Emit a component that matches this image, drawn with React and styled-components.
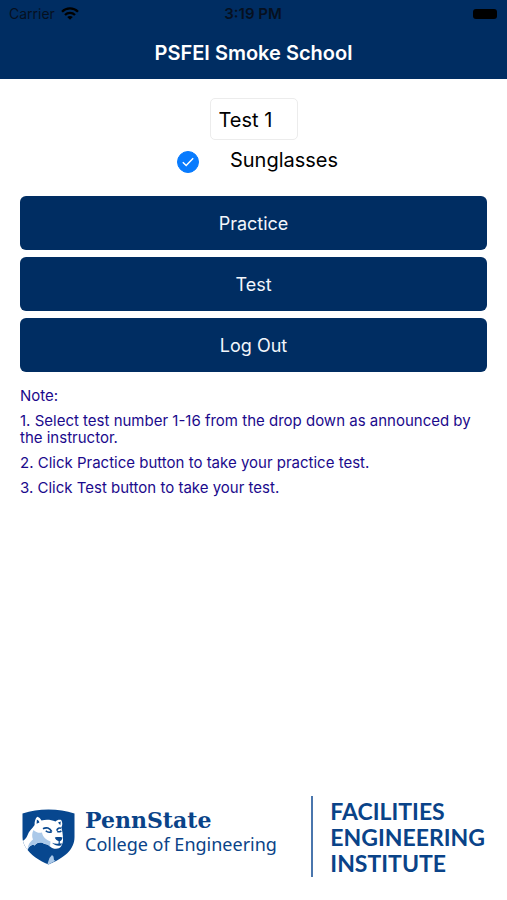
import React, { useState } from "react";
import styled, { createGlobalStyle } from "styled-components";

const NAVY = "#002d62";
const LOGO_BLUE = "#0a4388";

const GlobalStyle = createGlobalStyle`
  *, *::before, *::after { box-sizing: border-box; }
  body {
    margin: 0;
    background: #fff;
    color: #000;
    font-family: Inter, "Liberation Sans", sans-serif;
  }
`;

const Screen = styled.div`
  min-height: 100vh;
  display: flex;
  flex-direction: column;
`;

const Header = styled.header`
  background: ${NAVY};
  height: 79px;
`;

const StatusBar = styled.div`
  display: grid;
  grid-template-columns: 1fr auto 1fr;
  align-items: center;
  height: 27px;
  padding: 0 10px 0 9px;
  font-size: 14px;
  color: #06101f;
`;

const Carrier = styled.span`
  display: flex;
  align-items: center;
  gap: 6px;
`;

const Clock = styled.span`
  font-size: 15px;
  font-weight: 600;
`;

const Battery = styled.span`
  justify-self: end;
  width: 24px;
  height: 10px;
  border-radius: 3px;
  background: #000;
`;

const Title = styled.h1`
  margin: 0;
  font-size: 20px;
  line-height: 52px;
  font-weight: 600;
  color: #fff;
  text-align: center;
`;

const Form = styled.form`
  display: flex;
  flex-direction: column;
  align-items: center;
  padding: 19px 20px 0;
`;

const TestSelect = styled.select`
  appearance: none;
  width: 88px;
  height: 42px;
  padding: 2px 8px 0;
  border: 1px solid #ececec;
  border-radius: 5px;
  background: #fff;
  color: #000;
  font-family: inherit;
  font-size: 20px;
`;

const Option = styled.label`
  display: flex;
  align-items: center;
  gap: 31px;
  height: 40px;
  padding-left: 8px;
  font-size: 20px;
`;

const Tick = styled.span`
  display: grid;
  place-items: center;
  padding-top: 4px;

  > * { grid-area: 1 / 1; }
  > svg { pointer-events: none; }
`;

const TickInput = styled.input`
  appearance: none;
  width: 22px;
  height: 22px;
  margin: 0;
  border: 1px solid #c7c7cc;
  border-radius: 50%;

  &:checked {
    border-color: #087bfe;
    background: #087bfe;
  }
`;

const Actions = styled.div`
  align-self: stretch;
  display: flex;
  flex-direction: column;
  gap: 7px;
  padding-top: 16px;
`;

const ActionButton = styled.button`
  height: 54px;
  border: 0;
  border-radius: 6px;
  background: ${NAVY};
  color: #f2f6fb;
  font-family: inherit;
  font-size: 18px;
`;

const Notes = styled.section`
  display: flex;
  flex-direction: column;
  gap: 8px;
  padding: 15px 20px;
  font-size: 15px;
  line-height: 17px;
  color: #1b0a8c;
`;

const Note = styled.p`
  margin: 0;
`;

const Footer = styled.footer`
  display: flex;
  align-items: center;
  justify-content: space-between;
  margin-top: auto;
  padding: 0 22px 23px;
  color: ${LOGO_BLUE};
`;

const College = styled.div`
  display: flex;
  align-items: center;
  gap: 10px;
`;

const CollegeText = styled.div`
  display: flex;
  flex-direction: column;
  padding-bottom: 9px;
  white-space: nowrap;
`;

const University = styled.span`
  font-family: "DejaVu Serif", serif;
  font-weight: 700;
  font-size: 22px;
  line-height: 24px;
`;

const Department = styled.span`
  font-family: "Noto Sans", sans-serif;
  font-size: 18px;
  line-height: 24px;
`;

const Institute = styled.div`
  border-left: 2px solid #4a76ad;
  padding: 2px 0 1px 17px;
  font-family: Lato, sans-serif;
  font-weight: 700;
  font-size: 23px;
  line-height: 26px;
`;

const Line = styled.span`
  display: block;
`;

function WifiIcon() {
  return (
    <svg width="18" height="13" viewBox="0 0 18 13" aria-hidden="true" fill="none" stroke="#000" strokeWidth="2.3">
      <path d="M1 4.7C5.4.3 12.6.3 17 4.7" />
      <path d="M4 8C6.8 5.2 11.2 5.2 14 8" />
      <path d="M9 12.8 6.2 10C7.8 8.5 10.2 8.5 11.8 10Z" fill="#000" stroke="none" />
    </svg>
  );
}

function CheckIcon() {
  return (
    <svg width="12" height="10" viewBox="0 0 12 10" aria-hidden="true" fill="none" stroke="#fff" strokeWidth="1.5">
      <path d="M.8 5.2 4.2 8.5 11.2 1.2" />
    </svg>
  );
}

function LionShield() {
  return (
    <svg width="53" height="56" viewBox="0 0 53 56" role="img" aria-label="PennState shield">
      <path
        fill="#07478f"
        d="M.5 4.5C9 1.6 17 .5 26.5.5S44 1.6 52.5 4.5V28C52.5 41 42 49 26.5 55.5 17 51.5 8 45.5 3.8 38.5 1.5 35 .5 31.5.5 28Z"
      />
      <path
        fill="#fff"
        d="M12.6 16C12.4 12.5 13.4 9.5 15.2 7.8 17 8.2 18.5 9.7 19.5 11.5 24 10.4 29 10.6 33.5 12.6 35 11 37 10.4 39.2 11 40.7 13.5 40.6 16.5 39.3 18.5 40.5 22 40.8 25.5 41 29 41.3 32 40.6 35 39 37.6 37 40.6 31 40.5 28 37.5 26 35 22.5 35.3 19.5 33.5 16.5 33 14.5 34 12.5 36.5 9.5 35 6.5 38 5.5 41.5L3.8 38.5C1.8 35.5 1 32.5 1 31.8 3.2 30.5 4.3 28.8 5.4 26.4 6.8 22.4 10 19.8 12.6 16Z"
      />
      <path
        fill="#abc9e9"
        d="M11.5 21C14 23.5 17 24.4 20 23.5 20.6 27.5 24 31 28.5 32.5L28 37.5C26 35 22.5 35.3 19.5 33.5 16.5 33 14.5 34 12.5 36.5 9.5 35 6.5 38 5.5 41.5 6 35 8.4 32.5 11 30.5 9.7 27.5 10 24 11.5 21Z"
      />
      <path fill="#07478f" d="M14.9 10.4C16.5 11.2 17.2 12.2 17.4 13.5L14.6 14.8ZM36 13.6 38.8 12.6 38.3 16.2Z" />
      <path fill="#abc9e9" d="M25.5 54.8 27.5 49 30 46 31.5 47.5 32 51 33.5 51.8 26.5 55.5Z" />
      <path
        fill="none"
        stroke="#07478f"
        strokeWidth="1.6"
        d="M21 19.8C24.5 17.8 27.8 19 29.8 22.7M23.8 21.8C25.3 23.3 27.3 23.6 29.8 22.7M34.7 21.6C35.6 19.2 37.2 18.4 39 19.3M35.2 22.3C36.5 23.2 38 22.8 39.4 21.8"
      />
      <path fill="#07478f" d="M32.8 28.4C35.5 27.8 38 27.8 40.5 28.4 40.2 30.4 39.2 31.6 37.8 32.2V34.6L40.2 34.4 38.8 36.4C36 37 32.5 36.5 30 33.8 32.5 34.8 34.6 35 36.6 34.6V32C34.6 31.4 33.4 30.2 32.8 28.4Z" />
    </svg>
  );
}

export default function App() {
  const [sunglasses, setSunglasses] = useState(true);
  const [test, setTest] = useState("1");

  return (
    <>
      <GlobalStyle />
      <Screen>
        <Header>
          <StatusBar>
            <Carrier>
              Carrier
              <WifiIcon />
            </Carrier>
            <Clock>3:19 PM</Clock>
            <Battery />
          </StatusBar>
          <Title>PSFEI Smoke School</Title>
        </Header>

        <Form onSubmit={(e) => e.preventDefault()}>
          <TestSelect aria-label="Test number" value={test} onChange={(e) => setTest(e.target.value)}>
            {Array.from({ length: 16 }, (_, i) => (
              <option key={i} value={String(i + 1)}>{`Test ${i + 1}`}</option>
            ))}
          </TestSelect>
          <Option>
            <Tick>
              <TickInput
                type="checkbox"
                checked={sunglasses}
                onChange={(e) => setSunglasses(e.target.checked)}
              />
              {sunglasses && <CheckIcon />}
            </Tick>
            Sunglasses
          </Option>
          <Actions>
            <ActionButton type="button">Practice</ActionButton>
            <ActionButton type="button">Test</ActionButton>
            <ActionButton type="button">Log Out</ActionButton>
          </Actions>
        </Form>

        <Notes>
          <Note>Note:</Note>
          <Note>1. Select test number 1-16 from the drop down as announced by the instructor.</Note>
          <Note>2. Click Practice button to take your practice test.</Note>
          <Note>3. Click Test button to take your test.</Note>
        </Notes>

        <Footer>
          <College>
            <LionShield />
            <CollegeText>
              <University>PennState</University>
              <Department>College of Engineering</Department>
            </CollegeText>
          </College>
          <Institute>
            <Line>FACILITIES</Line>
            <Line>ENGINEERING</Line>
            <Line>INSTITUTE</Line>
          </Institute>
        </Footer>
      </Screen>
    </>
  );
}
